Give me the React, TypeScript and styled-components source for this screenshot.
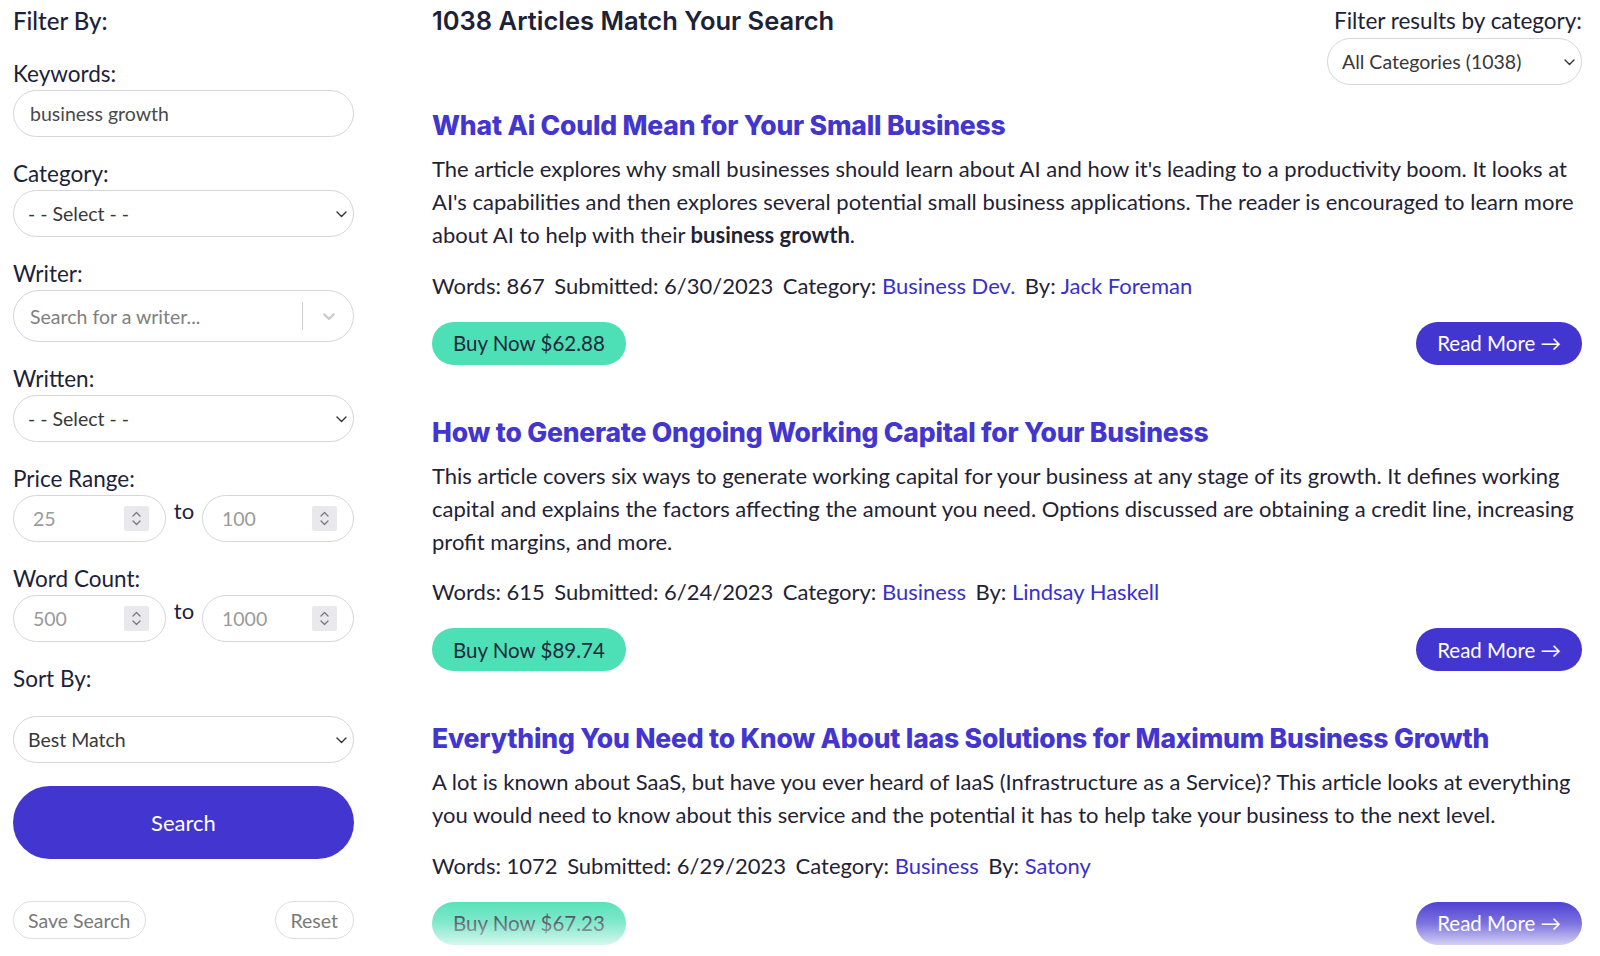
import React from "react";
import styled, { createGlobalStyle } from "styled-components";

const GlobalStyle = createGlobalStyle`
  html, body { margin: 0; padding: 0; background: #ffffff; }
  body { font-family: Lato, "Liberation Sans", sans-serif; color: #1c2237; }
  *, *::before, *::after { box-sizing: border-box; }
`;

const INK = "#1c2237";
const VIOLET = "#4335d0";
const LINK = "#3a2fc8";
const MINT = "#4ddfb5";

const Page = styled.div`
  width: 1600px;
  height: 956px;
  overflow: hidden;
  display: grid;
  grid-template-columns: 341px 1fr;
  column-gap: 78px;
  padding: 0 18px 0 13px;
`;

/* ---------- Sidebar ---------- */

const Sidebar = styled.aside`
  display: flex;
  flex-direction: column;
  padding-top: 7px;
`;

const SideTitle = styled.div`
  font-size: 24px;
  font-weight: 500;
  line-height: 28px;
  color: ${INK};
  margin-bottom: 25px;
`;

const Field = styled.div<{ $gap?: number }>`
  display: flex;
  flex-direction: column;
  gap: ${(p) => p.$gap ?? 2}px;
  margin-bottom: 23px;
`;

const Label = styled.label`
  font-size: 22.5px;
  line-height: 28px;
  color: ${INK};
`;

const TextInput = styled.input`
  width: 100%;
  height: 47px;
  border: 1px solid #d6d6da;
  border-radius: 24px;
  padding: 0 16px;
  font-family: Lato, "Liberation Sans", sans-serif;
  font-size: 19.5px;
  color: #4a4a4a;
  background: #fff;
  outline: none;
`;

const SelectWrap = styled.div<{ $width?: number }>`
  position: relative;
  width: ${(p) => (p.$width ? `${p.$width}px` : "100%")};
`;

const Select = styled.select`
  appearance: none;
  -webkit-appearance: none;
  width: 100%;
  height: 47px;
  border: 1px solid #d6d6da;
  border-radius: 24px;
  padding: 0 34px 0 14px;
  font-family: Lato, "Liberation Sans", sans-serif;
  font-size: 19.5px;
  color: #383838;
  background: #fff;
  outline: none;
`;

const SelectChevron = styled.svg`
  position: absolute;
  right: 7px;
  top: 50%;
  width: 11px;
  height: 7px;
  margin-top: -3px;
  pointer-events: none;
`;

const Chevron = () => (
  <SelectChevron viewBox="0 0 11 7">
    <polyline points="1,1 5.5,5.5 10,1" fill="none" stroke="#333" strokeWidth="1.4" strokeLinecap="round" strokeLinejoin="round" />
  </SelectChevron>
);

const Combo = styled.div`
  display: flex;
  align-items: center;
  height: 52px;
  border: 1px solid #d6d6da;
  border-radius: 26px;
  padding: 0 6px 0 14px;
  background: #fff;
`;

const ComboInput = styled.input`
  flex: 1;
  min-width: 0;
  border: none;
  outline: none;
  font-family: Lato, "Liberation Sans", sans-serif;
  font-size: 19.5px;
  color: #444;
  background: transparent;
  &::placeholder { color: #808080; }
`;

const ComboSep = styled.span`
  width: 1px;
  height: 28px;
  margin-right: 8px;
  background: #cccccc;
`;

const ComboIndicator = styled.span`
  display: flex;
  align-items: center;
  justify-content: center;
  width: 36px;
  height: 36px;
  color: #cccccc;
`;

const RangeRow = styled.div`
  display: grid;
  grid-template-columns: 153px 1fr 152px;
  align-items: start;
`;

const RangeTo = styled.span`
  justify-self: center;
  font-size: 22px;
  line-height: 28px;
  padding-top: 2px;
  color: ${INK};
`;

const NumberBox = styled.div`
  display: flex;
  align-items: center;
  height: 47px;
  border: 1px solid #d6d6da;
  border-radius: 24px;
  padding: 0 16px 0 17px;
  background: #fff;
`;

const NumberValue = styled.input`
  flex: 1;
  min-width: 0;
  border: none;
  outline: none;
  font-family: Lato, "Liberation Sans", sans-serif;
  font-size: 19.5px;
  color: #999;
  background: transparent;
  &::placeholder { color: #9a9a9a; }
`;

const Stepper = styled.span`
  display: flex;
  width: 25px;
  height: 25px;
  background: #e9e9ed;
  border-radius: 2px;
`;

const StepperIcon = () => (
  <svg width="25" height="25" viewBox="0 0 25 25">
    <polyline points="9,10 12.5,6.5 16,10" fill="none" stroke="#7a7a7a" strokeWidth="1.3" strokeLinecap="round" strokeLinejoin="round" />
    <polyline points="9,15 12.5,18.5 16,15" fill="none" stroke="#7a7a7a" strokeWidth="1.3" strokeLinecap="round" strokeLinejoin="round" />
  </svg>
);

const NumberField = ({ value }: { value: string }) => (
  <NumberBox>
    <NumberValue placeholder={value} />
    <Stepper>
      <StepperIcon />
    </Stepper>
  </NumberBox>
);

const SearchButton = styled.button`
  height: 73px;
  width: 100%;
  border: none;
  border-radius: 37px;
  background: ${VIOLET};
  color: #fff;
  font-family: Lato, "Liberation Sans", sans-serif;
  font-size: 22px;
`;

const SideActions = styled.div`
  display: flex;
  justify-content: space-between;
  margin-top: 42px;
`;

const GhostButton = styled.button`
  height: 38px;
  padding: 0 15px 0 14px;
  border: 1px solid #dedede;
  border-radius: 19px;
  background: #fff;
  color: #7a7a7a;
  font-family: Lato, "Liberation Sans", sans-serif;
  font-size: 19.5px;
`;

/* ---------- Main ---------- */

const Main = styled.main`
  position: relative;
  display: flex;
  flex-direction: column;
  &::after {
    content: "";
    position: absolute;
    left: 0;
    right: 0;
    top: 896px;
    height: 60px;
    background: linear-gradient(
      to bottom,
      rgba(255, 255, 255, 0) 0%,
      rgba(255, 255, 255, 0.3) 45%,
      rgba(255, 255, 255, 0.75) 80%,
      rgba(255, 255, 255, 0.92) 100%
    );
    pointer-events: none;
  }
`;

const HeaderRow = styled.header`
  display: flex;
  justify-content: space-between;
  align-items: flex-start;
  height: 84px;
`;

const ResultsHeading = styled.h1`
  margin: 0;
  font-family: Inter, "Open Sans", sans-serif;
  font-weight: 600;
  font-size: 25.5px;
  line-height: 41px;
  color: ${INK};
`;

const CategoryFilter = styled.div`
  display: flex;
  flex-direction: column;
  align-items: flex-end;
  padding-top: 7px;
  gap: 3px;
`;

const CategoryLabel = styled.span`
  font-size: 22.5px;
  line-height: 28px;
  color: ${INK};
`;

const ArticleList = styled.div`
  display: flex;
  flex-direction: column;
  gap: 49px;
  margin-top: 23px;
`;

const Article = styled.article`
  display: flex;
  flex-direction: column;
`;

const Title = styled.h2`
  margin: 0;
  font-family: Inter, "Open Sans", sans-serif;
  font-weight: 800;
  font-size: 26.5px;
  line-height: 36px;
  letter-spacing: -0.2px;
  color: ${VIOLET};
`;

const Description = styled.p`
  margin: 9px 0 0;
  font-size: 22px;
  line-height: 33.2px;
  color: #1f2335;
  b { font-weight: 700; }
`;

const Meta = styled.div`
  display: flex;
  gap: 9.5px;
  margin-top: 17px;
  font-size: 22px;
  line-height: 33px;
  color: #1f2335;
`;

const MetaLink = styled.a`
  color: ${LINK};
  text-decoration: none;
`;

const Actions = styled.div`
  display: flex;
  justify-content: space-between;
  margin-top: 20px;
`;

const PillButton = styled.button<{ $variant: "buy" | "read" }>`
  height: 43px;
  border: none;
  border-radius: 22px;
  padding: 0 21px;
  font-family: Lato, "Liberation Sans", sans-serif;
  font-size: 20.5px;
  background: ${(p) => (p.$variant === "buy" ? MINT : VIOLET)};
  color: ${(p) => (p.$variant === "buy" ? "#1f2a3a" : "#fff")};
`;

type ArticleData = {
  title: string;
  description: React.ReactNode;
  words: number;
  submitted: string;
  category: string;
  author: string;
  price: string;
};

const articles: ArticleData[] = [
  {
    title: "What Ai Could Mean for Your Small Business",
    description: (
      <>
        The article explores why small businesses should learn about AI and how it's leading to a productivity boom. It looks at
        AI's capabilities and then explores several potential small business applications. The reader is encouraged to learn more
        about AI to help with their <b>business growth</b>.
      </>
    ),
    words: 867,
    submitted: "6/30/2023",
    category: "Business Dev.",
    author: "Jack Foreman",
    price: "$62.88",
  },
  {
    title: "How to Generate Ongoing Working Capital for Your Business",
    description: (
      <>
        This article covers six ways to generate working capital for your business at any stage of its growth. It defines working
        capital and explains the factors affecting the amount you need. Options discussed are obtaining a credit line, increasing
        profit margins, and more.
      </>
    ),
    words: 615,
    submitted: "6/24/2023",
    category: "Business",
    author: "Lindsay Haskell",
    price: "$89.74",
  },
  {
    title: "Everything You Need to Know About Iaas Solutions for Maximum Business Growth",
    description: (
      <>
        A lot is known about SaaS, but have you ever heard of IaaS (Infrastructure as a Service)? This article looks at everything
        you would need to know about this service and the potential it has to help take your business to the next level.
      </>
    ),
    words: 1072,
    submitted: "6/29/2023",
    category: "Business",
    author: "Satony",
    price: "$67.23",
  },
];

const ComboChevron = () => (
  <svg width="20" height="20" viewBox="0 0 20 20" fill="currentColor">
    <path d="M4.516 7.548c0.436-0.446 1.043-0.481 1.576 0l3.908 3.747 3.908-3.747c0.533-0.481 1.141-0.446 1.574 0 0.436 0.445 0.408 1.197 0 1.615-0.406 0.418-4.695 4.502-4.695 4.502-0.217 0.223-0.502 0.335-0.787 0.335s-0.57-0.112-0.789-0.335c0 0-4.287-4.084-4.695-4.502s-0.436-1.17 0-1.615z" />
  </svg>
);

export default function App() {
  return (
    <>
      <GlobalStyle />
      <Page>
        <Sidebar>
          <SideTitle>Filter By:</SideTitle>

          <Field>
            <Label>Keywords:</Label>
            <TextInput defaultValue="business growth" />
          </Field>

          <Field>
            <Label>Category:</Label>
            <SelectWrap>
              <Select defaultValue="">
                <option value="">- - Select - -</option>
              </Select>
              <Chevron />
            </SelectWrap>
          </Field>

          <Field>
            <Label>Writer:</Label>
            <Combo>
              <ComboInput placeholder="Search for a writer..." />
              <ComboSep />
              <ComboIndicator>
                <ComboChevron />
              </ComboIndicator>
            </Combo>
          </Field>

          <Field>
            <Label>Written:</Label>
            <SelectWrap>
              <Select defaultValue="">
                <option value="">- - Select - -</option>
              </Select>
              <Chevron />
            </SelectWrap>
          </Field>

          <Field>
            <Label>Price Range:</Label>
            <RangeRow>
              <NumberField value="25" />
              <RangeTo>to</RangeTo>
              <NumberField value="100" />
            </RangeRow>
          </Field>

          <Field>
            <Label>Word Count:</Label>
            <RangeRow>
              <NumberField value="500" />
              <RangeTo>to</RangeTo>
              <NumberField value="1000" />
            </RangeRow>
          </Field>

          <Field $gap={23}>
            <Label>Sort By:</Label>
            <SelectWrap>
              <Select defaultValue="best">
                <option value="best">Best Match</option>
              </Select>
              <Chevron />
            </SelectWrap>
          </Field>

          <SearchButton>Search</SearchButton>

          <SideActions>
            <GhostButton>Save Search</GhostButton>
            <GhostButton>Reset</GhostButton>
          </SideActions>
        </Sidebar>

        <Main>
          <HeaderRow>
            <ResultsHeading>1038 Articles Match Your Search</ResultsHeading>
            <CategoryFilter>
              <CategoryLabel>Filter results by category:</CategoryLabel>
              <SelectWrap $width={255}>
                <Select defaultValue="all">
                  <option value="all">All Categories (1038)</option>
                </Select>
                <Chevron />
              </SelectWrap>
            </CategoryFilter>
          </HeaderRow>

          <ArticleList>
            {articles.map((a) => (
              <Article key={a.title}>
                <Title>{a.title}</Title>
                <Description>{a.description}</Description>
                <Meta>
                  <span>Words: {a.words}</span>
                  <span>Submitted: {a.submitted}</span>
                  <span>
                    Category: <MetaLink href="#">{a.category}</MetaLink>
                  </span>
                  <span>
                    By: <MetaLink href="#">{a.author}</MetaLink>
                  </span>
                </Meta>
                <Actions>
                  <PillButton $variant="buy">Buy Now {a.price}</PillButton>
                  <PillButton $variant="read">Read More →</PillButton>
                </Actions>
              </Article>
            ))}
          </ArticleList>
        </Main>
      </Page>
    </>
  );
}
